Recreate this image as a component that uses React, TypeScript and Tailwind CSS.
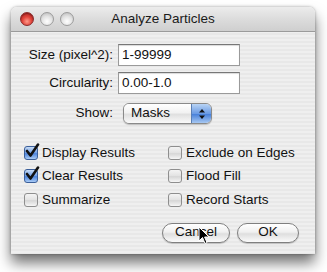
import React from 'react';

const Light = ({ red }: { red?: boolean }) => (
  <div
    className={
      red
        ? 'w-[14px] h-[14px] rounded-full border border-[#8a2a2a] bg-[radial-gradient(circle_at_50%_70%,#ff9a8a_0%,#e0433a_45%,#9e1a1a_100%)] shadow-[inset_0_1px_1px_rgba(0,0,0,0.3)]'
        : 'w-[14px] h-[14px] rounded-full border border-[#9c9c9c] bg-[radial-gradient(circle_at_50%_70%,#ffffff_0%,#e2e2e2_50%,#b4b4b4_100%)]'
    }
  />
);

const Check = ({ label, checked }: { label: string; checked?: boolean }) => (
  <div className="flex items-center h-[23.5px]">
    <div className="relative w-[14px] h-[14px] mr-[4px]">
      <div
        className={
          checked
            ? 'w-[14px] h-[14px] rounded-[3px] border border-[#3b5f9a] bg-[linear-gradient(#c8dcf6,#6f9ee6_50%,#4d84dc_55%,#a9cbf5)]'
            : 'w-[14px] h-[14px] rounded-[3px] border border-[#8e8e8e] bg-[linear-gradient(#f4f4f4,#e2e2e2_50%,#d6d6d6_55%,#f6f6f6)]'
        }
      />
      {checked && (
        <svg className="absolute left-[1px] top-[-3px]" width="15" height="15" viewBox="0 0 15 15">
          <path d="M2 8 L5.5 12.5 L13 1.5" fill="none" stroke="#111" strokeWidth="2.6" strokeLinecap="round" strokeLinejoin="round" />
        </svg>
      )}
    </div>
    <span>{label}</span>
  </div>
);

const Field = ({ label, value }: { label: string; value: string }) => (
  <div className="flex items-center">
    <div className="w-[102px] text-right">{label}</div>
    <div className="ml-[5px] w-[122px] h-[22px] bg-white border border-[#9a9a9a] border-t-[#777] shadow-[inset_0_1px_1px_rgba(0,0,0,0.15)] flex items-center pl-[3px]">
      {value}
    </div>
  </div>
);

const Button = ({ label, w }: { label: string; w: string }) => (
  <div
    className={`${w} h-[20px] rounded-full border border-[#7f7f7f] bg-[linear-gradient(#ffffff,#f0f0f0_45%,#dedede_55%,#fbfbfb)] shadow-[0_1px_1px_rgba(0,0,0,0.2)] flex items-center justify-center`}
  >
    {label}
  </div>
);

export default function App() {
  return (
    <div className="w-[327px] h-[272px] bg-white overflow-hidden pt-[7px] pl-[11px] font-['Liberation_Sans',Arial,sans-serif] text-[13.5px] text-[#111]">
      <div className="relative w-[304px] h-[247px] flex flex-col rounded-t-[6px] shadow-[0_9px_14px_rgba(0,0,0,0.55),0_0_3px_rgba(0,0,0,0.35)] bg-[repeating-linear-gradient(#efefef_0px,#efefef_2px,#e8e8e8_2px,#e8e8e8_4px)]">
        {/* title bar */}
        <div className="relative h-[25px] flex items-center rounded-t-[6px] border-b border-[#9b9b9b] bg-[linear-gradient(#ececec,#dcdcdc_50%,#cfcfcf)]">
          <div className="flex gap-[6px] pl-[9px]">
            <Light red />
            <Light />
            <Light />
          </div>
          <div className="absolute inset-0 flex items-center justify-center text-[#1a1a1a]">
            Analyze Particles
          </div>
        </div>

        {/* content */}
        <div className="flex flex-col pt-[12px]">
          <div className="flex flex-col gap-[6px]">
            <Field label="Size (pixel^2):" value="1-99999" />
            <Field label="Circularity:" value="0.00-1.0" />
          </div>
          <div className="flex items-center mt-[9px]">
            <div className="w-[102px] text-right">Show:</div>
            <div className="ml-[10px] w-[89px] h-[21px] flex rounded-[6px] border border-[#8a8a8a] overflow-hidden shadow-[0_1px_1px_rgba(0,0,0,0.2)]">
              <div className="flex-1 flex items-center pl-[7px] bg-[linear-gradient(#ffffff,#f2f2f2_45%,#e0e0e0_55%,#fafafa)]">Masks</div>
              <div className="w-[20px] flex items-center justify-center bg-[linear-gradient(#b9d4f5,#6b9be4_50%,#4a82da_55%,#a7c8f2)] border-l border-[#5a7fb5]">
                <svg width="8" height="12" viewBox="0 0 8 12">
                  <path d="M4 1 L7 4.5 L1 4.5 Z" fill="#111" />
                  <path d="M4 11 L7 7.5 L1 7.5 Z" fill="#111" />
                </svg>
              </div>
            </div>
          </div>

          <div className="flex mt-[17px] pl-[13px]">
            <div className="flex flex-col w-[144px]">
              <Check label="Display Results" checked />
              <Check label="Clear Results" checked />
              <Check label="Summarize" />
            </div>
            <div className="flex flex-col">
              <Check label="Exclude on Edges" />
              <Check label="Flood Fill" />
              <Check label="Record Starts" />
            </div>
          </div>

          <div className="flex justify-end gap-[7px] pr-[16px] mt-[11px]">
            <Button label="Cancel" w="w-[68px]" />
            <Button label="OK" w="w-[62px]" />
          </div>
        </div>

        {/* mouse pointer */}
        <svg className="absolute left-[187px] top-[219px]" width="12" height="19" viewBox="0 0 12 19">
          <path d="M1 1 L1 15 L4.5 11.5 L7 17.5 L9 16.6 L6.6 11 L11 11 Z" fill="#000" stroke="#fff" strokeWidth="1" strokeLinejoin="round" />
        </svg>
      </div>
    </div>
  );
}
